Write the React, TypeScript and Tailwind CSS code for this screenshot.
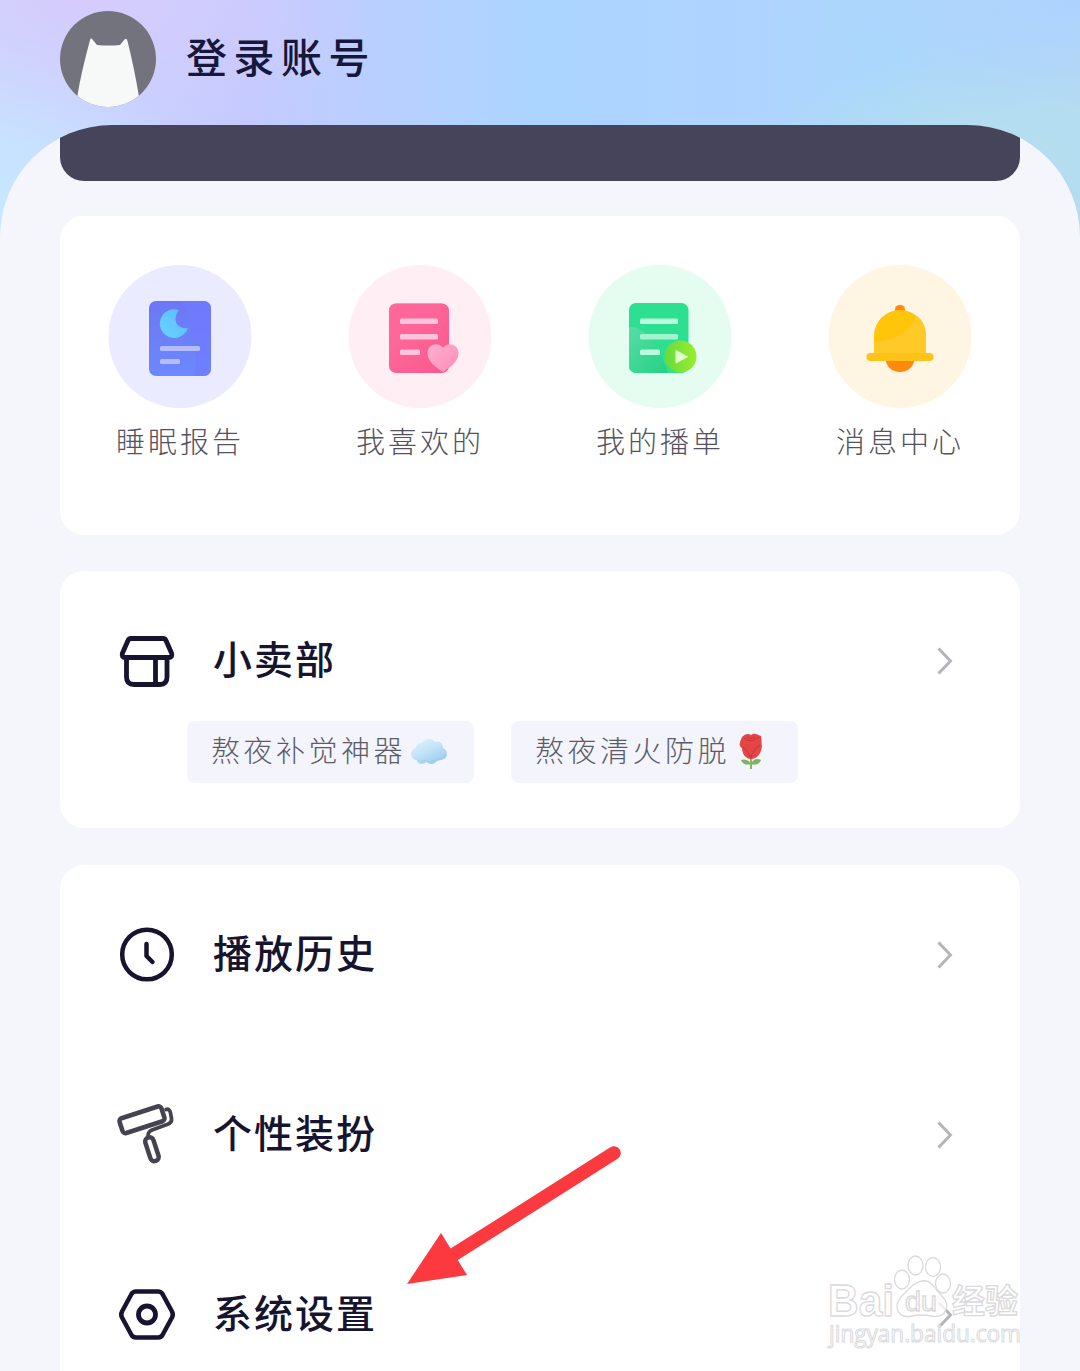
import React from "react";

const INK = "#17142f";

function Avatar() {
  return (
    <svg viewBox="0 0 96 96" className="h-24 w-24 shrink-0">
      <defs>
        <clipPath id="avatar-clip">
          <circle cx="48" cy="48" r="48" />
        </clipPath>
      </defs>
      <g clipPath="url(#avatar-clip)">
        <rect width="96" height="96" fill="#73737d" />
        <path d="M17 96 V87 C20 67 25 48 30 29 Q31 26.500 32.500 28.500 L37 34 Q48 35 60 34 L64.500 28.500 Q66.500 26.500 67.500 30 C72 48 76 67 79 86 V96Z" fill="#f7f8f8" />
      </g>
    </svg>
  );
}

function ReportIcon() {
  return (
    <svg viewBox="0 0 144 144" className="h-36 w-36">
      <defs>
        <linearGradient id="report" x1="0" y1="0" x2="0" y2="1">
          <stop offset="0" stopColor="#6c77f5" />
          <stop offset="1" stopColor="#6c88fc" />
        </linearGradient>
        <linearGradient id="report-moon" x1="1" y1="0" x2="0" y2="1">
          <stop offset="0" stopColor="#5eb9ff" />
          <stop offset="1" stopColor="#66d6ff" />
        </linearGradient>
      </defs>
      <circle cx="72" cy="72.500" r="71.500" fill="#ebebff" />
      <rect x="41" y="37" width="62" height="75" rx="7" fill="url(#report)" />
      <path d="M72 37h24a7 7 0 0 1 7 7v61a7 7 0 0 1-7 7H87C90 82 86 54 72 37Z" fill="#7179ff" opacity=".6" />
      <path d="M71 46.200A14.300 14.300 0 1 0 79.800 64C73 65 67.500 61 67.500 55C67.500 51.500 69 48.500 71 46.200Z" fill="url(#report-moon)" />
      <rect x="52" y="82" width="40" height="5" rx="1.500" fill="#b3bdff" />
      <rect x="52" y="95" width="20" height="5" rx="1.500" fill="#b3bdff" />
    </svg>
  );
}

function LikedIcon() {
  return (
    <svg viewBox="0 0 144 144" className="h-36 w-36">
      <defs>
        <linearGradient id="liked" x1="0" y1="0" x2="1" y2="1">
          <stop offset="0" stopColor="#ff6f9f" />
          <stop offset="1" stopColor="#fa588d" />
        </linearGradient>
        <linearGradient id="liked-heart" x1="0" y1="0" x2="1" y2="1">
          <stop offset="0" stopColor="#ffb2d0" />
          <stop offset="1" stopColor="#ff8ab4" />
        </linearGradient>
      </defs>
      <circle cx="72" cy="72.500" r="71.500" fill="#ffeff4" />
      <rect x="41" y="39.500" width="60" height="69.500" rx="7" fill="url(#liked)" />
      <path d="M97 41L73 64L41 82V46.500a7 7 0 0 1 7-7h45a7 7 0 0 1 4 1.500Z" fill="#ff6598" opacity=".65" />
      <rect x="52" y="54.500" width="38" height="5.500" rx="1.500" fill="#ffc4db" />
      <rect x="52" y="70" width="38" height="5.500" rx="1.500" fill="#ffc4db" />
      <rect x="52" y="85.500" width="20" height="5.500" rx="1.500" fill="#ffc4db" />
      <path d="M95 108C87 103 79.500 97 79.500 89C79.500 80 91 77 95 84C99 77 110.500 80 110.500 89C110.500 97 103 103 95 108Z" fill="url(#liked-heart)" />
    </svg>
  );
}

function PlaylistIcon() {
  return (
    <svg viewBox="0 0 144 144" className="h-36 w-36">
      <defs>
        <linearGradient id="playlist-wave" x1="0" y1="0" x2="1" y2="1">
          <stop offset="0" stopColor="#57dda8" />
          <stop offset="1" stopColor="#24d181" />
        </linearGradient>
        <linearGradient id="playlist-play" x1="0" y1="0" x2="1" y2="0">
          <stop offset="0" stopColor="#68da3e" />
          <stop offset="1" stopColor="#9aec2e" />
        </linearGradient>
      </defs>
      <circle cx="72" cy="72.500" r="71.500" fill="#e5fcf1" />
      <rect x="41" y="39" width="59.500" height="70" rx="7" fill="#2de091" />
      <path d="M41 63C56 62 69 76 80 109H48a7 7 0 0 1-7-7Z" fill="url(#playlist-wave)" />
      <rect x="52" y="54.500" width="38" height="5.500" rx="1.500" fill="#b9fbdc" />
      <rect x="52" y="70" width="38" height="5.500" rx="1.500" fill="#a4f3d0" />
      <rect x="52" y="85.500" width="20" height="5.500" rx="1.500" fill="#b9fbdc" />
      <circle cx="92.500" cy="92.500" r="16" fill="url(#playlist-play)" />
      <path d="M88 86.500V99L99.500 92.800Z" fill="#dcffcb" stroke="#dcffcb" strokeLinejoin="round" />
    </svg>
  );
}

function BellIcon() {
  return (
    <svg viewBox="0 0 144 144" className="h-36 w-36">
      <circle cx="72" cy="72.500" r="71.500" fill="#fff5e3" />
      <rect x="67" y="41" width="10" height="10" rx="4.500" fill="#ff890d" />
      <path d="M57 93H87C86 103 80 108 72 108S58 103 57 93Z" fill="#ff890d" />
      <path d="M46 91V72a26 26 0 0 1 52 0V91Z" fill="#ffc50a" />
      <path d="M88 51.500C95 56 98 63 98 72V91H46V78C68 76 83 68 88 51.500Z" fill="#ffca27" />
      <rect x="38.500" y="89" width="67" height="8" rx="4" fill="#ffc218" />
    </svg>
  );
}

function ShopIcon() {
  return (
    <svg viewBox="0 0 60 60" className="h-[60px] w-[60px]" fill="none" stroke={INK} strokeWidth="4.800" strokeLinejoin="round">
      <path d="M14 7.500H46Q48 7.500 49 9.500L54.500 22Q56 26.500 51.500 26.500H8.500Q4 26.500 5.500 22L11 9.500Q12 7.500 14 7.500Z" />
      <path d="M9.500 27V46Q9.500 53.500 17 53.500H43Q50 53.500 50 46V27M38.500 27V53.500" />
    </svg>
  );
}

function ClockIcon() {
  return (
    <svg viewBox="0 0 60 60" className="h-[60px] w-[60px]" fill="none" stroke={INK} strokeWidth="4.500" strokeLinecap="round" strokeLinejoin="round">
      <circle cx="30" cy="29.500" r="24.800" />
      <path d="M29.500 19V31L35.500 37" />
    </svg>
  );
}

function RollerIcon() {
  return (
    <svg viewBox="0 0 60 60" className="h-[60px] w-[60px] overflow-visible" fill="none" stroke="#454350" strokeWidth="4.500" strokeLinecap="round" strokeLinejoin="round">
      <rect x="3" y="7" width="44" height="15.500" rx="3" transform="rotate(-18 25 14.750)" />
      <path d="M49 4.500C51.500 3.500 53 5.500 53.500 8L54.500 13.500C55 16.500 53 18.500 50 19.500L35 25Q31 26.500 31 31" strokeWidth="3.800" />
      <rect x="30.700" y="32" width="8.500" height="24.500" rx="4" transform="rotate(-18 34.950 44.250)" />
    </svg>
  );
}

function NutIcon() {
  return (
    <svg viewBox="0 0 60 60" className="h-[60px] w-[60px]" fill="none" stroke={INK} strokeWidth="4.500" strokeLinejoin="round">
      <path d="M19 6.500H41Q44 6.500 45.500 9L55 26.500Q56.500 29.500 55 32.500L45.500 50Q44 52.500 41 52.500H19Q16 52.500 14.500 50L5 32.500Q3.500 29.500 5 26.500L14.500 9Q16 6.500 19 6.500Z" />
      <circle cx="30" cy="29.500" r="8.500" strokeWidth="4.800" />
    </svg>
  );
}

function Chevron() {
  return (
    <svg viewBox="0 0 18 30" className="ml-auto h-[30px] w-[18px]" fill="none" stroke="#b4b4b9" strokeWidth="3">
      <path d="M2.500 2.500L14.500 15L2.500 27.500" />
    </svg>
  );
}

function Cloud() {
  return (
    <svg viewBox="0 0 38 28" className="ml-1 h-7 w-[38px]">
      <defs>
        <linearGradient id="cloud" x1="0" y1="0" x2=".7" y2="1">
          <stop offset="0" stopColor="#e4f1fa" />
          <stop offset=".5" stopColor="#c4e4f8" />
          <stop offset="1" stopColor="#9ccbf0" />
        </linearGradient>
      </defs>
      <path d="M6 10C6 6 10 5 12 5C15 0 23 0 25 4C30 2 33 6 33 10C38 12 38 19 34 21C30 23 28 22 26 24C22 28 18 25 16 24C12 28 7 25 7 22C0 22-1 12 6 10Z" fill="url(#cloud)" />
      <path d="M7 22Q11 25 16 22Q21 26 27 21Q33 22 35 17" fill="none" stroke="#91bfe6" strokeWidth="1" opacity=".4" />
    </svg>
  );
}

function Rose() {
  return (
    <svg viewBox="0 0 24 38" className="ml-[9px] h-[38px] w-6">
      <path d="M12 24V36" stroke="#86b760" strokeWidth="2" />
      <path d="M12 31C9 26 5 26 2 27C4 32 8 32 12 31C16 32 20 32 22 27C18 25 14 26 12 31Z" fill="#7bb55b" />
      <path d="M3 4C6 1 9 0 12 2C16-1 19 2 22 3C23 7 22 9 23 13C22 21 18 26 12 26C6 26 3 20 3 15C-1 13 1 9 3 4Z" fill="#e54545" />
      <path d="M5 5Q11 11 20 4M4 14Q9 18 12 25Q13 17 21 12M8 4Q12 7 16 4" fill="none" stroke="#c9343c" strokeWidth="1" />
    </svg>
  );
}

const shortcuts = [
  { label: "睡眠报告", icon: <ReportIcon /> },
  { label: "我喜欢的", icon: <LikedIcon /> },
  { label: "我的播单", icon: <PlaylistIcon /> },
  { label: "消息中心", icon: <BellIcon /> },
];

function MenuRow({ icon, label }: { icon: React.ReactNode; label: string }) {
  return (
    <div className="flex h-[180px] items-center pr-[66px] pl-[57px]">
      {icon}
      <span className="mb-2 ml-9 text-[39px] leading-none font-medium tracking-[2px] text-[#17142f]">{label}</span>
      <Chevron />
    </div>
  );
}

function Chip({ label, children }: { label: string; children: React.ReactNode }) {
  return (
    <div className="flex h-[62px] w-[287px] items-center rounded-lg bg-[#f3f4fc] pl-6">
      <span className="mb-1.5 text-[29px] leading-none font-light tracking-[3.5px] text-[#5c5b68]">{label}</span>
      {children}
    </div>
  );
}

function Watermark() {
  return (
    <svg viewBox="0 0 210 110" className="absolute top-[1250px] left-[825px] h-[110px] w-[210px]" fill="#fff" fillOpacity=".8" stroke="#dadadc" strokeWidth="1.300">
      <text x="3" y="66" fontFamily="Liberation Sans, sans-serif" fontSize="45" fontWeight="700" textLength="66" lengthAdjust="spacingAndGlyphs">Bai</text>
      <ellipse cx="77" cy="29.500" rx="7.500" ry="9.500" />
      <ellipse cx="90.500" cy="15.500" rx="7.500" ry="9.500" />
      <ellipse cx="108" cy="17" rx="7.500" ry="9.500" />
      <ellipse cx="118" cy="33.500" rx="7.500" ry="9.500" />
      <path d="M97 31C106 29 109 38 117 46C127 56 120 69 106 66Q97 64 87 66C73 69 67 56 77 46C84 39 88 33 97 31Z" />
      <text x="80" y="61" fontFamily="Liberation Sans, sans-serif" fontSize="27" textLength="32" lengthAdjust="spacingAndGlyphs">du</text>
      <text x="127" y="63" fontFamily="Noto Sans CJK SC, sans-serif" fontSize="33" fontWeight="700" textLength="66">经验</text>
      <text x="4" y="92" fontFamily="Open Sans, sans-serif" fontSize="23" textLength="192" lengthAdjust="spacingAndGlyphs" strokeWidth="1">jingyan.baidu.com</text>
    </svg>
  );
}

export default function App() {
  return (
    <div className="relative h-[1371px] w-[1080px] overflow-hidden bg-[linear-gradient(90deg,#c6dfff_0%,#c5caff_22%,#b8d0ff_36%,#abd4ff_50%,#afd3ff_68%,#abd8fb_82%,#b4daf2_100%)] font-['Noto_Sans_CJK_SC',sans-serif]">
      <div className="bg-[radial-gradient(ellipse_300px_150px_at_80px_0px,#d6cbfc_0%,transparent_100%),radial-gradient(ellipse_190px_170px_at_0px_210px,#c8e6ff_0%,transparent_100%),radial-gradient(ellipse_300px_110px_at_1080px_0px,#aed2ff_0%,transparent_100%),radial-gradient(ellipse_240px_100px_at_980px_160px,#b6dfee_0%,transparent_100%)]">
        <header className="flex h-[125px] items-start px-[60px] pt-[11px]">
          <Avatar />
          <h1 className="mt-6 ml-[30px] text-[41px] leading-none font-medium tracking-[6.5px] text-[#17173a]">登录账号</h1>
        </header>
        <main className="h-[1246px] overflow-hidden rounded-t-[112px] bg-[#f5f6fb] px-[60px]">
          <div className="h-14 rounded-b-3xl bg-[#45445a]" />
          <section className="mt-[35px] grid h-[319px] grid-cols-4 rounded-3xl bg-white pt-12">
            {shortcuts.map(({ label, icon }) => (
              <div key={label} className="flex flex-col items-center">
                {icon}
                <span className="mt-[18px] text-[29px] leading-none font-light tracking-[3px] text-[#53525e]">{label}</span>
              </div>
            ))}
          </section>
          <section className="mt-9 h-[257px] rounded-3xl bg-white">
            <div className="-mb-[30px]">
              <MenuRow icon={<ShopIcon />} label="小卖部" />
            </div>
            <div className="flex gap-[37px] pl-[127px]">
              <Chip label="熬夜补觉神器"><Cloud /></Chip>
              <Chip label="熬夜清火防脱"><Rose /></Chip>
            </div>
          </section>
          <section className="mt-[37px] rounded-3xl bg-white">
            <MenuRow icon={<ClockIcon />} label="播放历史" />
            <MenuRow icon={<RollerIcon />} label="个性装扮" />
            <MenuRow icon={<NutIcon />} label="系统设置" />
          </section>
        </main>
      </div>
      <svg viewBox="0 0 220 145" className="absolute top-[1143px] left-[405px] h-[145px] w-[220px]">
        <path d="M209 10L48 112" stroke="#fb393f" strokeWidth="13.500" strokeLinecap="round" />
        <path d="M2 141L36 90L62 132Z" fill="#fb393f" />
      </svg>
      <Watermark />
    </div>
  );
}
